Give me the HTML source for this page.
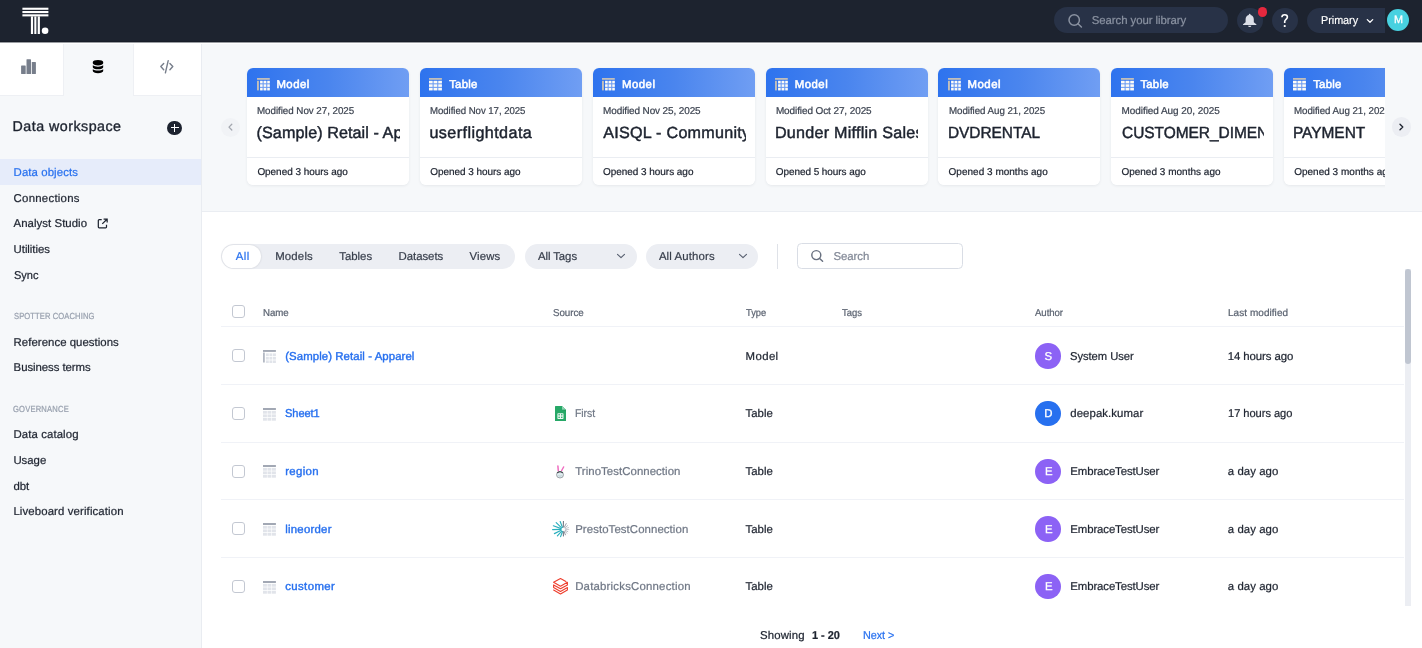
<!DOCTYPE html>
<html>
<head>
<meta charset="utf-8">
<title>Data workspace</title>
<style>
*{box-sizing:border-box;margin:0;padding:0}
html,body{width:1422px;height:648px;overflow:hidden;background:#fff;font-family:"Liberation Sans",sans-serif;color:#1d232f}
.abs{position:absolute}
.t{position:absolute;white-space:nowrap;line-height:1;text-rendering:geometricPrecision;-webkit-text-stroke-width:.22px}
#top{position:absolute;left:0;top:0;width:1422px;height:42px;background:#1d232f}
#side{position:absolute;left:0;top:42px;width:201px;height:606px;background:#f6f8fa}
#sideb{position:absolute;left:201px;top:42px;width:1px;height:606px;background:#e9ecf1}
#strip{position:absolute;left:202px;top:42px;width:1220px;height:169px;background:#f6f8fa}
#stripb{position:absolute;left:202px;top:211px;width:1220px;height:1px;background:#eaedf2}
.tab{position:absolute;top:42px;height:54px;background:#fff}
.card{position:absolute;top:68px;width:162px;height:117px;background:#fff;border-radius:6px;overflow:hidden}
.cardsh{position:absolute;top:68px;width:162px;height:117px;border-radius:6px;box-shadow:0 1px 3px rgba(29,35,47,.075)}
.hd{position:absolute;left:0;top:0;width:100%;height:29px;background:linear-gradient(90deg,#2e73ee 0%,#4a85ee 50%,#709ef3 100%)}
.dv{position:absolute;left:0;top:89px;width:100%;height:1px;background:#eaedf2}
.cb{position:absolute;left:232px;width:13px;height:13px;border:1px solid #c3c8d2;border-radius:3px;background:#fff}
.rl{position:absolute;left:221px;width:1183px;height:1px;background:#f0f2f7}
.av{position:absolute;left:1035px;width:25.5px;height:25.5px;border-radius:50%;background:#8c62f5}
.pill{position:absolute;top:243.5px;height:25.5px;border-radius:13px;background:#eceef3}
</style>
</head>
<body>
<div id="top"></div>
<div id="side"></div>
<div id="sideb"></div>
<div id="strip"></div>
<div id="stripb"></div>
<div id="gl" style="position:absolute;left:0;top:0;width:1422px;height:648px;will-change:transform">
<svg class="abs" style="left:20px;top:5px" width="32" height="32" viewBox="0 0 32 32"><g fill="#fff">
<rect x="2.4" y="2.7" width="26" height="2.1"/><rect x="2.4" y="6" width="26" height="2.1"/><rect x="2.4" y="9.3" width="26" height="2.1"/>
<rect x="10.9" y="11.4" width="2.2" height="17.6"/><rect x="14.3" y="11.4" width="2.1" height="17.6"/><rect x="17.7" y="11.4" width="2.2" height="17.6"/>
<circle cx="25.1" cy="25.7" r="3.3"/></g></svg>
<div class="abs" style="left:1054px;top:7px;width:174px;height:26px;border-radius:13px;background:#283247"></div>
<svg class="abs" style="left:1066px;top:12px" width="18" height="18" viewBox="0 0 18 18"><circle cx="8.2" cy="8" r="5.2" fill="none" stroke="#8a92a1" stroke-width="1.5"/><path d="M12 11.8 L15.4 15" stroke="#8a92a1" stroke-width="1.5" stroke-linecap="round"/></svg>
<div class="t" style="left:1091.80px;top:16.00px;font-size:11.4px;color:#8a92a1;letter-spacing:-0.066px;">Search your library</div>
<div class="abs" style="left:1237px;top:7.5px;width:25.5px;height:25.5px;border-radius:50%;background:#283247"></div>
<svg class="abs" style="left:1242px;top:13px" width="16" height="16" viewBox="0 0 16 16"><path fill="#dcdfe8" d="M7.7 .8c-.5 0-.9.4-.9.9v.3C4.800 2.500 3.600 4.200 3.600 6.300v2.900L1.100 11.200c-.3.300-.1.800.3.800h12.600c.4 0 .6-.5.300-.8L11.800 9.200V6.300c0-2.100-1.200-3.800-3.200-4.300v-.3c0-.5-.4-.9-.9-.9zM6 12.800c.2.800.9 1.300 1.700 1.300s1.500-.5 1.700-1.300z"/></svg>
<div class="abs" style="left:1257.8px;top:7.2px;width:9.6px;height:9.6px;border-radius:50%;background:#e5283e"></div>
<div class="abs" style="left:1272px;top:7.5px;width:25.5px;height:25.5px;border-radius:50%;background:#283247"></div>
<svg class="abs" style="left:1280px;top:13px" width="10" height="15" viewBox="0 0 10 15"><path d="M1.900 4.300C1.900 2.700 3.100 1.700 4.700 1.700c1.600 0 2.700 1 2.700 2.400 0 2.300-2.700 2.300-2.700 4.500v1.300" fill="none" stroke="#fff" stroke-width="1.600"/><rect x="3.800" y="12.100" width="1.800" height="1.900" fill="#fff"/></svg>
<div class="abs" style="left:1307px;top:7.6px;width:78px;height:25.4px;border-radius:13px 0 0 13px;background:#283247"></div>
<div class="t" style="left:1320.60px;top:16.00px;font-size:11.4px;color:#fff;letter-spacing:-0.050px;-webkit-text-stroke:.15px #fff;transform:scaleX(0.9532);transform-origin:0 0;">Primary</div>
<svg class="abs" style="left:1365px;top:17px" width="10" height="8" viewBox="0 0 10 8"><path d="M2.300 2.600 L5 5.200 L7.700 2.600" fill="none" stroke="#fff" stroke-width="1.300" stroke-linecap="round" stroke-linejoin="round"/></svg>
<div class="abs" style="left:1385.5px;top:7.700px;width:25px;height:25px;border-radius:50%;background:#1d232f"></div>
<div class="abs" style="left:1387px;top:9.200px;width:22px;height:22px;border-radius:50%;background:#48d1e0"></div>
<div class="t" style="left:1394.00px;top:15.00px;font-size:10.83px;color:#fff;-webkit-text-stroke:.3px #fff;">M</div>
<div class="abs" style="left:0;top:42px;width:201px;height:2px;background:#fff"></div><div class="tab" style="left:0;width:63.500px;border-right:1px solid #eef0f4;border-bottom:1px solid #eef0f4"></div><div class="tab" style="left:132.500px;width:68.500px;border-left:1px solid #eef0f4;border-bottom:1px solid #eef0f4"></div><div class="abs" style="left:0;top:41px;width:1422px;height:1px;background:#181d28"></div><div class="abs" style="left:0;top:42px;width:1422px;height:2px;background:#fff"></div><div class="abs" style="left:0;top:42px;width:1422px;height:1px;background:rgba(29,35,47,.45)"></div>
<svg class="abs" style="left:21px;top:59px" width="15" height="15" viewBox="0 0 15 15"><g fill="#777e8b"><rect x="0.100" y="6.400" width="4.600" height="8.600" rx=".6"/><rect x="5.500" y="0.200" width="4.500" height="14.800" rx=".6"/><rect x="10.800" y="2.900" width="4.100" height="12.100" rx=".6"/></g></svg>
<svg class="abs" style="left:92px;top:59px" width="12" height="15" viewBox="0 0 12 15"><g fill="#000">
<path d="M.8 3C.8 1.800 3.100 .9 6 .9s5.200.9 5.200 2.100v1.300c0 1.200-2.300 2.100-5.200 2.100S.8 5.500.8 4.300z"/>
<path d="M.8 6.300c1 .9 3 1.400 5.200 1.400s4.200-.5 5.200-1.400v1.900c0 1.200-2.300 2.100-5.200 2.100S.8 9.400.8 8.200z"/>
<path d="M.8 10.200c1 .9 3 1.400 5.200 1.400s4.200-.5 5.200-1.400v1.900c0 1.200-2.300 2.100-5.200 2.100S.8 13.300.8 12.100z"/>
</g></svg>
<svg class="abs" style="left:159px;top:59px" width="16" height="16" viewBox="0 0 16 16"><g fill="none" stroke="#777e8b" stroke-width="1.400" stroke-linecap="round" stroke-linejoin="round"><path d="M4.700 4.500 L1.800 7.600 L4.700 10.700"/><path d="M10.900 4.500 L13.800 7.600 L10.900 10.700"/><path d="M9.200 1.700 L6.400 13.900"/></g></svg>
<div class="t" style="left:12.60px;top:120.00px;font-size:14.25px;color:#1d232f;letter-spacing:0.481px;-webkit-text-stroke:.35px #1d232f;">Data workspace</div>
<div class="abs" style="left:167.4px;top:120.500px;width:14.600px;height:14.600px;border-radius:50%;background:#1d232f"></div>
<div class="abs" style="left:170.700px;top:127.100px;width:8px;height:1.400px;background:#fff"></div><div class="abs" style="left:174px;top:123.800px;width:1.400px;height:8px;background:#fff"></div>
<div class="abs" style="left:0;top:159.400px;width:201px;height:25.300px;background:#e6ecfa"></div>
<div class="t" style="left:13.60px;top:168.00px;font-size:11.4px;color:#2770ef;letter-spacing:0.089px;">Data objects</div>
<div class="t" style="left:13.60px;top:194.00px;font-size:11.4px;color:#1d232f;letter-spacing:0.257px;">Connections</div>
<div class="t" style="left:13.60px;top:219.00px;font-size:11.4px;color:#1d232f;letter-spacing:0.048px;">Analyst Studio</div>
<svg class="abs" style="left:97.300px;top:217.700px" width="11.300" height="11.300" viewBox="0 0 12 12"><g fill="none" stroke="#1d232f" stroke-width="1.300"><path d="M5 1.800H2.300a.9.900 0 0 0-.9.900v6.900a.9.900 0 0 0 .9.900h6.900a.9.900 0 0 0 .9-.9V7.200"/><path d="M7 1.100h3.800v3.800M10.600 1.300 5.600 6.300"/></g></svg>
<div class="t" style="left:13.60px;top:245.00px;font-size:11.4px;color:#1d232f;letter-spacing:-0.052px;">Utilities</div>
<div class="t" style="left:13.60px;top:271.00px;font-size:11.4px;color:#1d232f;letter-spacing:-0.050px;transform:scaleX(0.9695);transform-origin:0 0;">Sync</div>
<div class="t" style="left:13.60px;top:312.00px;font-size:8.84px;color:#98a0ae;letter-spacing:0.117px;transform:scaleX(0.86);transform-origin:0 0;">SPOTTER COACHING</div>
<div class="t" style="left:13.60px;top:338.00px;font-size:11.4px;color:#1d232f;letter-spacing:0.040px;">Reference questions</div>
<div class="t" style="left:13.60px;top:363.00px;font-size:11.4px;color:#1d232f;letter-spacing:-0.059px;">Business terms</div>
<div class="t" style="left:13.40px;top:405.00px;font-size:8.84px;color:#98a0ae;letter-spacing:0.220px;transform:scaleX(0.86);transform-origin:0 0;">GOVERNANCE</div>
<div class="t" style="left:13.40px;top:430.00px;font-size:11.4px;color:#1d232f;letter-spacing:0.107px;">Data catalog</div>
<div class="t" style="left:13.40px;top:456.00px;font-size:11.4px;color:#1d232f;letter-spacing:-0.023px;">Usage</div>
<div class="t" style="left:13.40px;top:482.00px;font-size:11.4px;color:#1d232f;letter-spacing:0.015px;">dbt</div>
<div class="t" style="left:13.40px;top:507.00px;font-size:11.4px;color:#1d232f;letter-spacing:0.119px;">Liveboard verification</div>
<div class="abs" style="left:240px;top:60px;width:1145px;height:140px;overflow:hidden">
<div class="cardsh" style="left:7.2px;top:8px"></div>
<div class="card" style="left:7.2px;top:8px"><div class="hd"></div><svg class="abs" style="left:9.400px;top:10.300px" width="13.200" height="12.600" viewBox="0 0 13.200 12.600"><rect x="0" y="0" width="12.800" height="1.800" fill="#c2bfba"/><rect x="0" y="2.800" width="1.900" height="9.600" fill="#c2bfba"/><rect x="3.100" y="2.800" width="9.700" height="9.600" fill="#fff" fill-opacity=".28"/><g fill="#fdfbf6"><rect x="3.10" y="2.80" width="2.500" height="2.500"/><rect x="6.70" y="2.80" width="2.500" height="2.500"/><rect x="10.30" y="2.80" width="2.500" height="2.500"/><rect x="3.10" y="6.35" width="2.500" height="2.500"/><rect x="6.70" y="6.35" width="2.500" height="2.500"/><rect x="10.30" y="6.35" width="2.500" height="2.500"/><rect x="3.10" y="9.90" width="2.500" height="2.500"/><rect x="6.70" y="9.90" width="2.500" height="2.500"/><rect x="10.30" y="9.90" width="2.500" height="2.500"/></g></svg>
<div class="t" style="left:29.20px;top:12.00px;font-size:11.4px;color:#fff;letter-spacing:0.477px;-webkit-text-stroke:.55px #fff;">Model</div>
<div class="t" style="left:10.30px;top:39.00px;font-size:9.97px;color:#3c4350;letter-spacing:-0.050px;transform:scaleX(0.9838);transform-origin:0 0;">Modified Nov 27, 2025</div>
<div class="abs" style="left:0;top:50px;width:152.800px;height:30px;overflow:hidden">
<div class="t" style="left:9.40px;top:7.00px;font-size:16.15px;color:#1d232f;letter-spacing:0.074px;-webkit-text-stroke:.45px #1d232f;">(Sample) Retail - Apparel</div>
</div>
<div class="dv"></div>
<div class="t" style="left:10.20px;top:100.00px;font-size:9.97px;color:#1d232f;letter-spacing:-0.033px;">Opened 3 hours ago</div>
</div>
<div class="cardsh" style="left:180.0px;top:8px"></div>
<div class="card" style="left:180.0px;top:8px"><div class="hd"></div><svg class="abs" style="left:9.400px;top:10.300px" width="13.200" height="12.600" viewBox="0 0 13.200 12.600"><rect x="0" y="0" width="12.900" height="1.800" fill="#c2bfba"/><rect x="0" y="2.800" width="12.900" height="9.600" fill="#fff" fill-opacity=".28"/><g fill="#fdfbf6"><rect x="0.00" y="2.80" width="3.600" height="2.500"/><rect x="4.65" y="2.80" width="3.600" height="2.500"/><rect x="9.30" y="2.80" width="3.600" height="2.500"/><rect x="0.00" y="6.35" width="3.600" height="2.500"/><rect x="4.65" y="6.35" width="3.600" height="2.500"/><rect x="9.30" y="6.35" width="3.600" height="2.500"/><rect x="0.00" y="9.90" width="3.600" height="2.500"/><rect x="4.65" y="9.90" width="3.600" height="2.500"/><rect x="9.30" y="9.90" width="3.600" height="2.500"/></g></svg>
<div class="t" style="left:29.20px;top:12.00px;font-size:11.4px;color:#fff;letter-spacing:0.226px;-webkit-text-stroke:.55px #fff;">Table</div>
<div class="t" style="left:10.30px;top:39.00px;font-size:9.97px;color:#3c4350;letter-spacing:-0.050px;transform:scaleX(0.9667);transform-origin:0 0;">Modified Nov 17, 2025</div>
<div class="abs" style="left:0;top:50px;width:152.800px;height:30px;overflow:hidden">
<div class="t" style="left:9.40px;top:7.00px;font-size:16.15px;color:#1d232f;letter-spacing:0.421px;-webkit-text-stroke:.45px #1d232f;">userflightdata</div>
</div>
<div class="dv"></div>
<div class="t" style="left:10.20px;top:100.00px;font-size:9.97px;color:#1d232f;letter-spacing:-0.027px;">Opened 3 hours ago</div>
</div>
<div class="cardsh" style="left:352.8px;top:8px"></div>
<div class="card" style="left:352.8px;top:8px"><div class="hd"></div><svg class="abs" style="left:9.400px;top:10.300px" width="13.200" height="12.600" viewBox="0 0 13.200 12.600"><rect x="0" y="0" width="12.800" height="1.800" fill="#c2bfba"/><rect x="0" y="2.800" width="1.900" height="9.600" fill="#c2bfba"/><rect x="3.100" y="2.800" width="9.700" height="9.600" fill="#fff" fill-opacity=".28"/><g fill="#fdfbf6"><rect x="3.10" y="2.80" width="2.500" height="2.500"/><rect x="6.70" y="2.80" width="2.500" height="2.500"/><rect x="10.30" y="2.80" width="2.500" height="2.500"/><rect x="3.10" y="6.35" width="2.500" height="2.500"/><rect x="6.70" y="6.35" width="2.500" height="2.500"/><rect x="10.30" y="6.35" width="2.500" height="2.500"/><rect x="3.10" y="9.90" width="2.500" height="2.500"/><rect x="6.70" y="9.90" width="2.500" height="2.500"/><rect x="10.30" y="9.90" width="2.500" height="2.500"/></g></svg>
<div class="t" style="left:29.20px;top:12.00px;font-size:11.4px;color:#fff;letter-spacing:0.477px;-webkit-text-stroke:.55px #fff;">Model</div>
<div class="t" style="left:10.30px;top:39.00px;font-size:9.97px;color:#3c4350;letter-spacing:-0.110px;">Modified Nov 25, 2025</div>
<div class="abs" style="left:0;top:50px;width:152.800px;height:30px;overflow:hidden">
<div class="t" style="left:10.40px;top:7.00px;font-size:16.15px;color:#1d232f;letter-spacing:0.250px;-webkit-text-stroke:.45px #1d232f;">AISQL - Community Edition</div>
</div>
<div class="dv"></div>
<div class="t" style="left:10.20px;top:100.00px;font-size:9.97px;color:#1d232f;letter-spacing:-0.027px;">Opened 3 hours ago</div>
</div>
<div class="cardsh" style="left:525.6px;top:8px"></div>
<div class="card" style="left:525.6px;top:8px"><div class="hd"></div><svg class="abs" style="left:9.400px;top:10.300px" width="13.200" height="12.600" viewBox="0 0 13.200 12.600"><rect x="0" y="0" width="12.800" height="1.800" fill="#c2bfba"/><rect x="0" y="2.800" width="1.900" height="9.600" fill="#c2bfba"/><rect x="3.100" y="2.800" width="9.700" height="9.600" fill="#fff" fill-opacity=".28"/><g fill="#fdfbf6"><rect x="3.10" y="2.80" width="2.500" height="2.500"/><rect x="6.70" y="2.80" width="2.500" height="2.500"/><rect x="10.30" y="2.80" width="2.500" height="2.500"/><rect x="3.10" y="6.35" width="2.500" height="2.500"/><rect x="6.70" y="6.35" width="2.500" height="2.500"/><rect x="10.30" y="6.35" width="2.500" height="2.500"/><rect x="3.10" y="9.90" width="2.500" height="2.500"/><rect x="6.70" y="9.90" width="2.500" height="2.500"/><rect x="10.30" y="9.90" width="2.500" height="2.500"/></g></svg>
<div class="t" style="left:29.20px;top:12.00px;font-size:11.4px;color:#fff;letter-spacing:0.477px;-webkit-text-stroke:.55px #fff;">Model</div>
<div class="t" style="left:10.30px;top:39.00px;font-size:9.97px;color:#3c4350;letter-spacing:-0.089px;">Modified Oct 27, 2025</div>
<div class="abs" style="left:0;top:50px;width:152.800px;height:30px;overflow:hidden">
<div class="t" style="left:9.40px;top:7.00px;font-size:16.15px;color:#1d232f;letter-spacing:0.234px;-webkit-text-stroke:.45px #1d232f;">Dunder Mifflin Sales &amp; Inv</div>
</div>
<div class="dv"></div>
<div class="t" style="left:10.20px;top:100.00px;font-size:9.97px;color:#1d232f;letter-spacing:-0.056px;">Opened 5 hours ago</div>
</div>
<div class="cardsh" style="left:698.4px;top:8px"></div>
<div class="card" style="left:698.4px;top:8px"><div class="hd"></div><svg class="abs" style="left:9.400px;top:10.300px" width="13.200" height="12.600" viewBox="0 0 13.200 12.600"><rect x="0" y="0" width="12.800" height="1.800" fill="#c2bfba"/><rect x="0" y="2.800" width="1.900" height="9.600" fill="#c2bfba"/><rect x="3.100" y="2.800" width="9.700" height="9.600" fill="#fff" fill-opacity=".28"/><g fill="#fdfbf6"><rect x="3.10" y="2.80" width="2.500" height="2.500"/><rect x="6.70" y="2.80" width="2.500" height="2.500"/><rect x="10.30" y="2.80" width="2.500" height="2.500"/><rect x="3.10" y="6.35" width="2.500" height="2.500"/><rect x="6.70" y="6.35" width="2.500" height="2.500"/><rect x="10.30" y="6.35" width="2.500" height="2.500"/><rect x="3.10" y="9.90" width="2.500" height="2.500"/><rect x="6.70" y="9.90" width="2.500" height="2.500"/><rect x="10.30" y="9.90" width="2.500" height="2.500"/></g></svg>
<div class="t" style="left:29.20px;top:12.00px;font-size:11.4px;color:#fff;letter-spacing:0.477px;-webkit-text-stroke:.55px #fff;">Model</div>
<div class="t" style="left:10.30px;top:39.00px;font-size:9.97px;color:#3c4350;letter-spacing:-0.050px;transform:scaleX(0.9787);transform-origin:0 0;">Modified Aug 21, 2025</div>
<div class="abs" style="left:0;top:50px;width:152.800px;height:30px;overflow:hidden">
<div class="t" style="left:9.44px;top:7.00px;font-size:16.15px;color:#1d232f;letter-spacing:-0.050px;-webkit-text-stroke:.45px #1d232f;transform:scaleX(0.9571);transform-origin:0 0;">DVDRENTAL</div>
</div>
<div class="dv"></div>
<div class="t" style="left:10.20px;top:100.00px;font-size:9.97px;color:#1d232f;letter-spacing:0.027px;">Opened 3 months ago</div>
</div>
<div class="cardsh" style="left:871.2px;top:8px"></div>
<div class="card" style="left:871.2px;top:8px"><div class="hd"></div><svg class="abs" style="left:9.400px;top:10.300px" width="13.200" height="12.600" viewBox="0 0 13.200 12.600"><rect x="0" y="0" width="12.900" height="1.800" fill="#c2bfba"/><rect x="0" y="2.800" width="12.900" height="9.600" fill="#fff" fill-opacity=".28"/><g fill="#fdfbf6"><rect x="0.00" y="2.80" width="3.600" height="2.500"/><rect x="4.65" y="2.80" width="3.600" height="2.500"/><rect x="9.30" y="2.80" width="3.600" height="2.500"/><rect x="0.00" y="6.35" width="3.600" height="2.500"/><rect x="4.65" y="6.35" width="3.600" height="2.500"/><rect x="9.30" y="6.35" width="3.600" height="2.500"/><rect x="0.00" y="9.90" width="3.600" height="2.500"/><rect x="4.65" y="9.90" width="3.600" height="2.500"/><rect x="9.30" y="9.90" width="3.600" height="2.500"/></g></svg>
<div class="t" style="left:29.20px;top:12.00px;font-size:11.4px;color:#fff;letter-spacing:0.226px;-webkit-text-stroke:.55px #fff;">Table</div>
<div class="t" style="left:10.30px;top:39.00px;font-size:9.97px;color:#3c4350;letter-spacing:-0.046px;">Modified Aug 20, 2025</div>
<div class="abs" style="left:0;top:50px;width:152.800px;height:30px;overflow:hidden">
<div class="t" style="left:10.40px;top:7.00px;font-size:16.15px;color:#1d232f;letter-spacing:-0.050px;-webkit-text-stroke:.45px #1d232f;transform:scaleX(0.9594);transform-origin:0 0;">CUSTOMER_DIMENSION</div>
</div>
<div class="dv"></div>
<div class="t" style="left:10.20px;top:100.00px;font-size:9.97px;color:#1d232f;letter-spacing:0.027px;">Opened 3 months ago</div>
</div>
<div class="cardsh" style="left:1044.0px;top:8px"></div>
<div class="card" style="left:1044.0px;top:8px"><div class="hd"></div><svg class="abs" style="left:9.400px;top:10.300px" width="13.200" height="12.600" viewBox="0 0 13.200 12.600"><rect x="0" y="0" width="12.900" height="1.800" fill="#c2bfba"/><rect x="0" y="2.800" width="12.900" height="9.600" fill="#fff" fill-opacity=".28"/><g fill="#fdfbf6"><rect x="0.00" y="2.80" width="3.600" height="2.500"/><rect x="4.65" y="2.80" width="3.600" height="2.500"/><rect x="9.30" y="2.80" width="3.600" height="2.500"/><rect x="0.00" y="6.35" width="3.600" height="2.500"/><rect x="4.65" y="6.35" width="3.600" height="2.500"/><rect x="9.30" y="6.35" width="3.600" height="2.500"/><rect x="0.00" y="9.90" width="3.600" height="2.500"/><rect x="4.65" y="9.90" width="3.600" height="2.500"/><rect x="9.30" y="9.90" width="3.600" height="2.500"/></g></svg>
<div class="t" style="left:29.20px;top:12.00px;font-size:11.4px;color:#fff;letter-spacing:0.226px;-webkit-text-stroke:.55px #fff;">Table</div>
<div class="t" style="left:10.30px;top:39.00px;font-size:9.97px;color:#3c4350;letter-spacing:-0.050px;transform:scaleX(0.9787);transform-origin:0 0;">Modified Aug 21, 2025</div>
<div class="abs" style="left:0;top:50px;width:152.800px;height:30px;overflow:hidden">
<div class="t" style="left:9.44px;top:7.00px;font-size:16.15px;color:#1d232f;letter-spacing:-0.050px;-webkit-text-stroke:.45px #1d232f;transform:scaleX(0.9588);transform-origin:0 0;">PAYMENT</div>
</div>
<div class="dv"></div>
<div class="t" style="left:10.20px;top:100.00px;font-size:9.97px;color:#1d232f;letter-spacing:0.027px;">Opened 3 months ago</div>
</div>
</div>
<div class="abs" style="left:221px;top:117.500px;width:19.200px;height:19.200px;border-radius:50%;background:#f1f3f6"></div>
<svg class="abs" style="left:226px;top:122px" width="10" height="10" viewBox="0 0 10 10"><path d="M5.800 2.200 L3 5.100 L5.800 8" fill="none" stroke="#a3a7af" stroke-width="1.300" stroke-linecap="round" stroke-linejoin="round"/></svg>
<div class="abs" style="left:1391.600px;top:117.200px;width:19.400px;height:19.400px;border-radius:50%;background:#eceef3"></div>
<svg class="abs" style="left:1396.300px;top:121.900px" width="10" height="10" viewBox="0 0 10 10"><path d="M4 2.200 L6.800 5 L4 7.800" fill="none" stroke="#1d232f" stroke-width="1.300" stroke-linecap="round" stroke-linejoin="round"/></svg>
<div class="pill" style="left:221px;width:294px"></div>
<div class="abs" style="left:222.200px;top:244.600px;width:39.200px;height:23.200px;border-radius:11.600px;background:#fff;box-shadow:0 0 2px rgba(29,35,47,.18)"></div>
<div class="t" style="left:235.70px;top:252.00px;font-size:11.4px;color:#2770ef;letter-spacing:0.486px;-webkit-text-stroke:.2px #2770ef;">All</div>
<div class="t" style="left:275.20px;top:252.00px;font-size:11.4px;color:#363d4a;letter-spacing:0.175px;-webkit-text-stroke:.2px #363d4a;">Models</div>
<div class="t" style="left:339.30px;top:252.00px;font-size:11.4px;color:#363d4a;letter-spacing:-0.026px;-webkit-text-stroke:.2px #363d4a;">Tables</div>
<div class="t" style="left:398.60px;top:252.00px;font-size:11.4px;color:#363d4a;letter-spacing:-0.051px;-webkit-text-stroke:.2px #363d4a;">Datasets</div>
<div class="t" style="left:469.60px;top:252.00px;font-size:11.4px;color:#363d4a;letter-spacing:0.129px;-webkit-text-stroke:.2px #363d4a;">Views</div>
<div class="pill" style="left:524.800px;width:112.300px"></div>
<div class="t" style="left:537.90px;top:252.00px;font-size:11.4px;color:#363d4a;letter-spacing:-0.070px;-webkit-text-stroke:.2px #363d4a;">All Tags</div>
<svg class="abs" style="left:616.100px;top:252.300px" width="10" height="8" viewBox="0 0 10 8"><path d="M1.500 2.300 L5 5.700 L8.500 2.300" fill="none" stroke="#586070" stroke-width="1.150" stroke-linecap="round" stroke-linejoin="round"/></svg>
<div class="pill" style="left:646.100px;width:111.900px"></div>
<div class="t" style="left:658.90px;top:252.00px;font-size:11.4px;color:#363d4a;letter-spacing:0.132px;-webkit-text-stroke:.2px #363d4a;">All Authors</div>
<svg class="abs" style="left:737.500px;top:252.300px" width="10" height="8" viewBox="0 0 10 8"><path d="M1.500 2.300 L5 5.700 L8.500 2.300" fill="none" stroke="#586070" stroke-width="1.150" stroke-linecap="round" stroke-linejoin="round"/></svg>
<div class="abs" style="left:777px;top:243.500px;width:1px;height:25.500px;background:#dfe2e8"></div>
<div class="abs" style="left:797px;top:243.300px;width:165.700px;height:25.500px;border:1px solid #d9dde5;border-radius:4.500px;background:#fff"></div>
<svg class="abs" style="left:809px;top:247.600px" width="16" height="16" viewBox="0 0 16 16"><circle cx="7.300" cy="7.100" r="4.500" fill="none" stroke="#697180" stroke-width="1.450"/><path d="M10.600 10.400 L13.600 13.300" stroke="#697180" stroke-width="1.450" stroke-linecap="round"/></svg>
<div class="t" style="left:833.40px;top:252.00px;font-size:11.4px;color:#808795;letter-spacing:-0.031px;">Search</div>
<div class="cb" style="top:305.300px"></div>
<div class="t" style="left:263.00px;top:309.00px;font-size:9.97px;color:#5b6371;letter-spacing:-0.050px;transform:scaleX(0.9704);transform-origin:0 0;">Name</div>
<div class="t" style="left:552.50px;top:309.00px;font-size:9.97px;color:#5b6371;letter-spacing:-0.050px;transform:scaleX(0.9814);transform-origin:0 0;">Source</div>
<div class="t" style="left:745.60px;top:309.00px;font-size:9.97px;color:#5b6371;letter-spacing:-0.050px;transform:scaleX(0.9353);transform-origin:0 0;">Type</div>
<div class="t" style="left:842.30px;top:309.00px;font-size:9.97px;color:#5b6371;letter-spacing:-0.050px;transform:scaleX(0.9511);transform-origin:0 0;">Tags</div>
<div class="t" style="left:1035.30px;top:309.00px;font-size:9.97px;color:#5b6371;letter-spacing:-0.050px;transform:scaleX(0.9631);transform-origin:0 0;">Author</div>
<div class="t" style="left:1228.00px;top:309.00px;font-size:9.97px;color:#5b6371;letter-spacing:0.063px;">Last modified</div>
<div class="rl" style="top:326px"></div>
<div class="rl" style="top:384px"></div>
<div class="rl" style="top:442px"></div>
<div class="rl" style="top:499px"></div>
<div class="rl" style="top:557px"></div>
<div class="cb" style="top:349.30px"></div>
<svg class="abs" style="left:262.900px;top:349.90px" width="13" height="13" viewBox="0 0 13 13"><rect x="0" y="0" width="12.900" height="1.900" fill="#a2a8b4"/><rect x="0" y="2.500" width="1.800" height="10" fill="#b3b9c4"/><g fill="#e1e4ea"><rect x="2.90" y="3.40" width="2.900" height="2.700"/><rect x="6.45" y="3.40" width="2.900" height="2.700"/><rect x="10.00" y="3.40" width="2.900" height="2.700"/><rect x="2.90" y="6.90" width="2.900" height="2.700"/><rect x="6.45" y="6.90" width="2.900" height="2.700"/><rect x="10.00" y="6.90" width="2.900" height="2.700"/><rect x="2.90" y="10.40" width="2.900" height="2.700"/><rect x="6.45" y="10.40" width="2.900" height="2.700"/><rect x="10.00" y="10.40" width="2.900" height="2.700"/></g></svg>
<div class="t" style="left:285.20px;top:352.00px;font-size:11.4px;color:#2770ef;letter-spacing:0.081px;-webkit-text-stroke:.4px #2770ef;">(Sample) Retail - Apparel</div>
<div class="t" style="left:745.60px;top:352.00px;font-size:11.4px;color:#1d232f;letter-spacing:0.377px;">Model</div>
<div class="av" style="top:343.30px;background:#8c62f5"></div>
<div class="t" style="left:1044.60px;top:352.00px;font-size:11.4px;color:#fff;-webkit-text-stroke:.3px #fff;">S</div>
<div class="t" style="left:1070.30px;top:352.00px;font-size:11.4px;color:#1d232f;letter-spacing:-0.050px;transform:scaleX(0.9846);transform-origin:0 0;">System User</div>
<div class="t" style="left:1227.80px;top:352.00px;font-size:11.4px;color:#1d232f;letter-spacing:-0.087px;">14 hours ago</div>
<div class="cb" style="top:406.95px"></div>
<svg class="abs" style="left:262.900px;top:407.55px" width="13" height="13" viewBox="0 0 13 13"><rect x="0" y="0" width="12.900" height="2" fill="#a2a8b4"/><g fill="#e1e4ea"><rect x="0.00" y="2.90" width="3.900" height="2.800"/><rect x="4.50" y="2.90" width="3.900" height="2.800"/><rect x="9.00" y="2.90" width="3.900" height="2.800"/><rect x="0.00" y="6.40" width="3.900" height="2.800"/><rect x="4.50" y="6.40" width="3.900" height="2.800"/><rect x="9.00" y="6.40" width="3.900" height="2.800"/><rect x="0.00" y="9.90" width="3.900" height="2.800"/><rect x="4.50" y="9.90" width="3.900" height="2.800"/><rect x="9.00" y="9.90" width="3.900" height="2.800"/></g></svg>
<div class="t" style="left:285.20px;top:409.00px;font-size:11.4px;color:#2770ef;letter-spacing:-0.050px;-webkit-text-stroke:.4px #2770ef;transform:scaleX(0.9686);transform-origin:0 0;">Sheet1</div>
<div class="t" style="left:575.20px;top:409.00px;font-size:11.4px;color:#6f7785;letter-spacing:-0.050px;transform:scaleX(0.9176);transform-origin:0 0;">First</div>
<div class="t" style="left:745.60px;top:409.00px;font-size:11.4px;color:#1d232f;letter-spacing:-0.024px;">Table</div>
<div class="av" style="top:400.95px;background:#2770ef"></div>
<div class="t" style="left:1044.30px;top:409.00px;font-size:11.4px;color:#fff;-webkit-text-stroke:.3px #fff;">D</div>
<div class="t" style="left:1070.30px;top:409.00px;font-size:11.4px;color:#1d232f;letter-spacing:0.065px;">deepak.kumar</div>
<div class="t" style="left:1227.80px;top:409.00px;font-size:11.4px;color:#1d232f;letter-spacing:-0.050px;transform:scaleX(0.9769);transform-origin:0 0;">17 hours ago</div>
<div class="cb" style="top:464.60px"></div>
<svg class="abs" style="left:262.900px;top:465.20px" width="13" height="13" viewBox="0 0 13 13"><rect x="0" y="0" width="12.900" height="2" fill="#a2a8b4"/><g fill="#e1e4ea"><rect x="0.00" y="2.90" width="3.900" height="2.800"/><rect x="4.50" y="2.90" width="3.900" height="2.800"/><rect x="9.00" y="2.90" width="3.900" height="2.800"/><rect x="0.00" y="6.40" width="3.900" height="2.800"/><rect x="4.50" y="6.40" width="3.900" height="2.800"/><rect x="9.00" y="6.40" width="3.900" height="2.800"/><rect x="0.00" y="9.90" width="3.900" height="2.800"/><rect x="4.50" y="9.90" width="3.900" height="2.800"/><rect x="9.00" y="9.90" width="3.900" height="2.800"/></g></svg>
<div class="t" style="left:285.20px;top:467.00px;font-size:11.4px;color:#2770ef;letter-spacing:0.334px;-webkit-text-stroke:.4px #2770ef;">region</div>
<div class="t" style="left:575.20px;top:467.00px;font-size:11.4px;color:#6f7785;letter-spacing:0.066px;">TrinoTestConnection</div>
<div class="t" style="left:745.60px;top:467.00px;font-size:11.4px;color:#1d232f;letter-spacing:-0.024px;">Table</div>
<div class="av" style="top:458.60px;background:#8c62f5"></div>
<div class="t" style="left:1044.90px;top:467.00px;font-size:11.4px;color:#fff;-webkit-text-stroke:.3px #fff;">E</div>
<div class="t" style="left:1070.30px;top:467.00px;font-size:11.4px;color:#1d232f;letter-spacing:-0.109px;">EmbraceTestUser</div>
<div class="t" style="left:1227.80px;top:467.00px;font-size:11.4px;color:#1d232f;letter-spacing:0.050px;">a day ago</div>
<div class="cb" style="top:522.25px"></div>
<svg class="abs" style="left:262.900px;top:522.85px" width="13" height="13" viewBox="0 0 13 13"><rect x="0" y="0" width="12.900" height="2" fill="#a2a8b4"/><g fill="#e1e4ea"><rect x="0.00" y="2.90" width="3.900" height="2.800"/><rect x="4.50" y="2.90" width="3.900" height="2.800"/><rect x="9.00" y="2.90" width="3.900" height="2.800"/><rect x="0.00" y="6.40" width="3.900" height="2.800"/><rect x="4.50" y="6.40" width="3.900" height="2.800"/><rect x="9.00" y="6.40" width="3.900" height="2.800"/><rect x="0.00" y="9.90" width="3.900" height="2.800"/><rect x="4.50" y="9.90" width="3.900" height="2.800"/><rect x="9.00" y="9.90" width="3.900" height="2.800"/></g></svg>
<div class="t" style="left:285.20px;top:525.00px;font-size:11.4px;color:#2770ef;letter-spacing:0.246px;-webkit-text-stroke:.4px #2770ef;">lineorder</div>
<div class="t" style="left:575.20px;top:525.00px;font-size:11.4px;color:#6f7785;letter-spacing:0.084px;">PrestoTestConnection</div>
<div class="t" style="left:745.60px;top:525.00px;font-size:11.4px;color:#1d232f;letter-spacing:-0.024px;">Table</div>
<div class="av" style="top:516.25px;background:#8c62f5"></div>
<div class="t" style="left:1044.90px;top:525.00px;font-size:11.4px;color:#fff;-webkit-text-stroke:.3px #fff;">E</div>
<div class="t" style="left:1070.30px;top:525.00px;font-size:11.4px;color:#1d232f;letter-spacing:-0.109px;">EmbraceTestUser</div>
<div class="t" style="left:1227.80px;top:525.00px;font-size:11.4px;color:#1d232f;letter-spacing:0.050px;">a day ago</div>
<div class="cb" style="top:579.90px"></div>
<svg class="abs" style="left:262.900px;top:580.50px" width="13" height="13" viewBox="0 0 13 13"><rect x="0" y="0" width="12.900" height="2" fill="#a2a8b4"/><g fill="#e1e4ea"><rect x="0.00" y="2.90" width="3.900" height="2.800"/><rect x="4.50" y="2.90" width="3.900" height="2.800"/><rect x="9.00" y="2.90" width="3.900" height="2.800"/><rect x="0.00" y="6.40" width="3.900" height="2.800"/><rect x="4.50" y="6.40" width="3.900" height="2.800"/><rect x="9.00" y="6.40" width="3.900" height="2.800"/><rect x="0.00" y="9.90" width="3.900" height="2.800"/><rect x="4.50" y="9.90" width="3.900" height="2.800"/><rect x="9.00" y="9.90" width="3.900" height="2.800"/></g></svg>
<div class="t" style="left:285.20px;top:582.00px;font-size:11.4px;color:#2770ef;letter-spacing:0.393px;-webkit-text-stroke:.4px #2770ef;">customer</div>
<div class="t" style="left:575.20px;top:582.00px;font-size:11.4px;color:#6f7785;letter-spacing:0.205px;">DatabricksConnection</div>
<div class="t" style="left:745.60px;top:582.00px;font-size:11.4px;color:#1d232f;letter-spacing:-0.024px;">Table</div>
<div class="av" style="top:573.90px;background:#8c62f5"></div>
<div class="t" style="left:1044.90px;top:582.00px;font-size:11.4px;color:#fff;-webkit-text-stroke:.3px #fff;">E</div>
<div class="t" style="left:1070.30px;top:582.00px;font-size:11.4px;color:#1d232f;letter-spacing:-0.109px;">EmbraceTestUser</div>
<div class="t" style="left:1227.80px;top:582.00px;font-size:11.4px;color:#1d232f;letter-spacing:0.050px;">a day ago</div>
<div class="abs" style="left:202px;top:606px;width:1220px;height:42px;background:#fff"></div>
<div class="t" style="left:760.00px;top:631.00px;font-size:11.4px;color:#1d232f;letter-spacing:0.157px;">Showing</div>
<div class="t" style="left:811.50px;top:631.00px;font-size:11.4px;font-weight:bold;color:#1d232f;letter-spacing:-0.050px;transform:scaleX(0.9635);transform-origin:0 0;">1 - 20</div>
<div class="t" style="left:862.50px;top:631.00px;font-size:11.4px;color:#2770ef;letter-spacing:-0.050px;transform:scaleX(0.9509);transform-origin:0 0;">Next &gt;</div>
<div class="abs" style="left:1404.500px;top:269px;width:6.400px;height:337px;background:#eceef3"></div>
<div class="abs" style="left:1404.500px;top:269px;width:6.400px;height:94.500px;border-radius:3.200px;background:#c0c6d1"></div>
<svg class="abs" style="left:555px;top:405.800px" width="11" height="15.400" viewBox="0 0 11 15.400"><path d="M.5 0H7L11 3.800V14.900a.5.500 0 0 1-.5.500H.5a.5.500 0 0 1-.5-.5V.5A.5.500 0 0 1 .5 0z" fill="#27a867"/><path d="M7 0 11 3.800H7.600A.6.600 0 0 1 7 3.200z" fill="#8fd3b3"/><path d="M7 3.800H11V5.400z" fill="#1f8f56" fill-opacity=".5"/><rect x="2.400" y="7.200" width="6.100" height="5.800" rx=".7" fill="#fff" fill-opacity=".92"/><g fill="#27a867"><rect x="3.400" y="8.200" width="1.500" height="1.200"/><rect x="6" y="8.200" width="1.500" height="1.200"/><rect x="3.400" y="10.700" width="1.500" height="1.200"/><rect x="6" y="10.700" width="1.500" height="1.200"/></g></svg>
<svg class="abs" style="left:555px;top:464.500px" width="11" height="14" viewBox="0 0 11 14"><path d="M2.900 1 L3.300 5.800" stroke="#ef6cc0" stroke-width="1.500" stroke-linecap="round" fill="none"/><path d="M8.700 1.900 L6.600 5.600" stroke="#ef6cc0" stroke-width="1.300" stroke-linecap="round" fill="none"/><ellipse cx="5" cy="9.700" rx="3.500" ry="3.300" fill="#deecef" stroke="#8b9096" stroke-width=".8"/><path d="M2.600 7.600 Q5 5.800 7.400 7.600" stroke="#33373d" stroke-width="1.100" fill="none" stroke-linecap="round"/><path d="M3.300 10.600 Q5 11.800 6.700 10.600" stroke="#aab9bd" stroke-width=".6" fill="none"/></svg>
<svg class="abs" style="left:552px;top:520.800px" width="18" height="17" viewBox="0 0 18 17"><g fill="none"><path d="M10.41 6.35 L8.19 0.58" stroke="#2aafbd" stroke-width="1.150" stroke-linecap="round"/><path d="M9.62 6.87 L4.18 1.58" stroke="#2aafbd" stroke-width="1.150" stroke-linecap="round"/><path d="M9.13 7.64 L1.37 4.79" stroke="#2aafbd" stroke-width="1.150" stroke-linecap="round"/><path d="M9.00 8.44 L0.57 8.60" stroke="#2aafbd" stroke-width="1.150" stroke-linecap="round"/><path d="M9.21 9.35 L2.38 12.61" stroke="#2aafbd" stroke-width="1.150" stroke-linecap="round"/><path d="M9.72 10.03 L5.38 14.82" stroke="#2aafbd" stroke-width="1.150" stroke-linecap="round"/><path d="M10.45 10.47 L8.59 15.62" stroke="#2aafbd" stroke-width="1.150" stroke-linecap="round"/><path d="M11.26 6.10 L11.40 0.18" stroke="#3b4656" stroke-width="0.80" stroke-linecap="round"/><path d="M11.27 10.70 L11.40 15.02" stroke="#3b4656" stroke-width="0.80" stroke-linecap="round"/><path d="M12.26 6.36 L14.21 2.58" stroke="#6b7483" stroke-width="0.70" stroke-linecap="round"/><path d="M12.94 6.90 L15.61 4.59" stroke="#8a919d" stroke-width="0.60" stroke-linecap="round"/><path d="M13.38 7.67 L16.62 6.59" stroke="#9aa1ac" stroke-width="0.55" stroke-linecap="round"/><path d="M13.50 8.48 L16.82 8.60" stroke="#9aa1ac" stroke-width="0.55" stroke-linecap="round"/><path d="M13.27 9.39 L15.81 10.61" stroke="#8a919d" stroke-width="0.60" stroke-linecap="round"/><path d="M12.78 10.07 L14.81 12.21" stroke="#7b8390" stroke-width="0.60" stroke-linecap="round"/><path d="M12.07 10.53 L13.41 13.82" stroke="#5d6675" stroke-width="0.70" stroke-linecap="round"/></g></svg>
<svg class="abs" style="left:552.900px;top:577.900px" width="15" height="17" viewBox="0 0 15 17"><g fill="none" stroke="#ee3d2c" stroke-width="1.100" stroke-linejoin="round" stroke-linecap="round"><path d="M12.900 3.400 7.500.5.600 4.300 7.500 8.200 14.400 4.300V6.900L7.500 10.800.600 6.900V9.500L7.500 13.400 14.400 9.500V12L7.500 15.900.600 12"/></g></svg>
</div>
</body>
</html>
